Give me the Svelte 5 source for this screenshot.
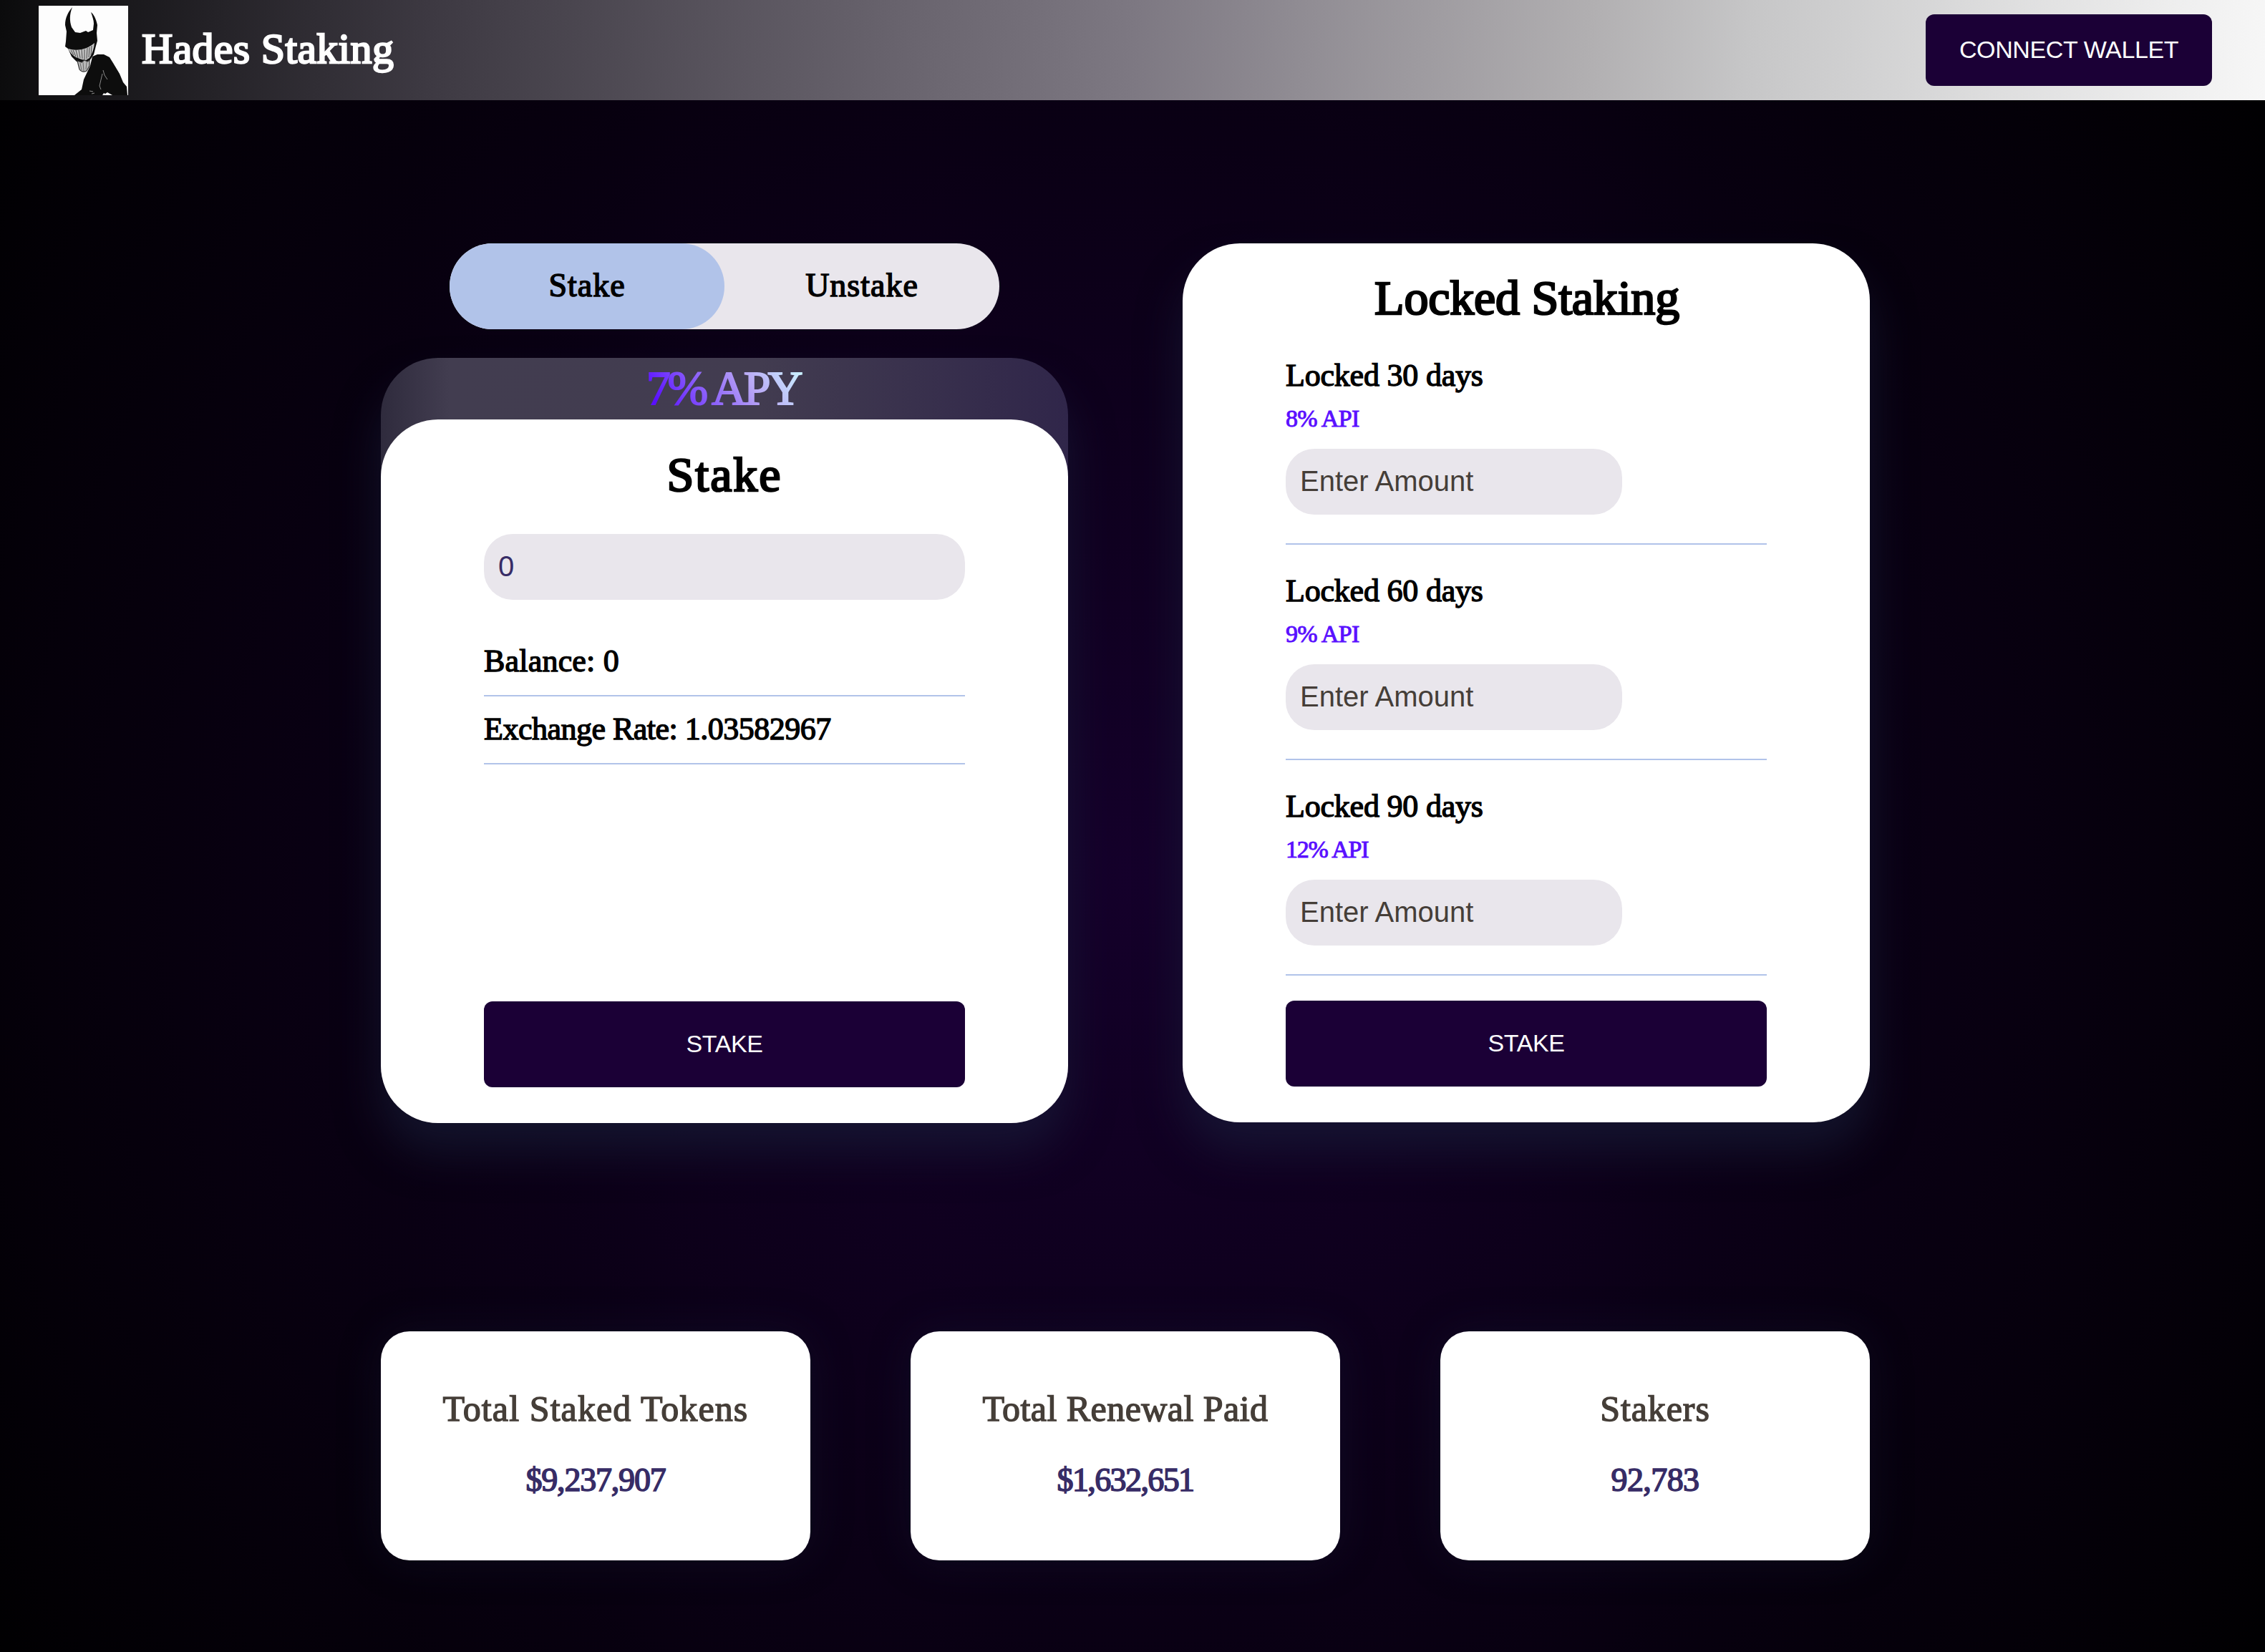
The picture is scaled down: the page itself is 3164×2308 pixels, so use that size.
<script>
  const locks = [
    { days: 'Locked 30 days', rate: '8% API', cls: 'r8' },
    { days: 'Locked 60 days', rate: '9% API', cls: 'r8' },
    { days: 'Locked 90 days', rate: '12% API', cls: 'r12' }
  ];
  const stats = [
    { label: 'Total Staked Tokens', value: '$9,237,907' },
    { label: 'Total Renewal Paid', value: '$1,632,651' },
    { label: 'Stakers', value: '92,783' }
  ];
</script>

<div class="page">
  <header>
    <div class="brand">
      <svg class="logo" viewBox="0 0 125 125">
        <rect width="125" height="125" fill="#fdfdfd" />
        <path fill="#0d0d0d" d="M47 2C41 9 37 17 37 27L39 36 38 50 37 57 41 60 46 71 53 78 63 81 71 77 77 68 80 56 82 49 81 38 82 27C80 18 77 12 73 9C75 15 77 20 77 25L76 34 69 37 66 35 58 38 51 37 46 30C43 21 43 12 47 2Z" />
        <path fill="#0d0d0d" d="M75 71L82 68 91 68 99 72 104 80 113 95 118 107 123 113 124 125H103L96 121 90 125H50L60 117 63 103 72 84Z" />
        <path fill="#c4c4c4" d="M41 60Q50 63 60 61T78 52Q77 64 71 73L66 76 60 75 52 72Q45 68 41 60Z" />
        <path stroke="#2b2b2b" stroke-width=".8" fill="none" d="M45 62 49 69M48 62 52 71M52 62 55 73M56 62 58 73M60 61 61 74M64 61 64 75M68 59 67 74M71 58 70 72M74 56 73 69" />
        <path fill="#b9b9b9" stroke="#333" stroke-width="1.2" d="M54 77 60 79 64 76 68 78 71 76 71 84 67 91Q61 94 57 89Z" />
        <path stroke="#555" stroke-width=".8" fill="none" d="M58 80 60 90M62 79 63 91M67 79 66 89" />
        <path stroke="#8b8b8b" stroke-width="1" fill="none" d="M90 90 92 97 96 103M89 95 85 112 87 117M71 119 76 120M74 123 78 122" />
        <path fill="#eee" d="M89 125 91 122 97 125Z" />
      </svg>
      <h1>Hades Staking</h1>
    </div>
    <button class="connect">CONNECT WALLET</button>
  </header>

  <main>
    <section class="left">
      <div class="toggle">
        <div class="tab active">Stake</div>
        <div class="tab">Unstake</div>
      </div>
      <div class="shell">
        <div class="apy"><span>7% APY</span></div>
        <div class="card">
          <h2 class="h-stake">Stake</h2>
          <div class="field amount">0</div>
          <div class="row first">Balance: 0</div>
          <div class="row exch">Exchange Rate: 1.03582967</div>
          <button class="action">STAKE</button>
        </div>
      </div>
    </section>

    <section class="card locked">
      <h2 class="h-locked">Locked Staking</h2>
      {#each locks as l}
        <div class="lock">
          <div class="days">{l.days}</div>
          <div class="rate {l.cls}">{l.rate}</div>
          <div class="field">Enter Amount</div>
        </div>
      {/each}
      <button class="action">STAKE</button>
    </section>
  </main>

  <footer>
    {#each stats as s, i}
      <div class="stat s{i}">
        <div class="label">{s.label}</div>
        <div class="value">{s.value}</div>
      </div>
    {/each}
  </footer>
</div>

<style>
  :global(body) { margin: 0; background: #000; }
  * { box-sizing: border-box; }
  .page {
    width: 3164px;
    height: 2308px;
    overflow: hidden;
    display: flex;
    flex-direction: column;
    background: radial-gradient(circle at 50% 53%, #15002b 0%, #000 100%);
    font-family: "Liberation Serif", serif;
    color: #000;
  }
  header {
    height: 140px;
    flex: none;
    display: flex;
    align-items: center;
    justify-content: space-between;
    padding: 0 74px 0 54px;
    background: linear-gradient(95deg, #0b0b0c 0%, #3d3942 19%, #69646e 40%, #7d7882 50%, #b1afb1 70%, #c6c6c7 77%, #f7f7f7 100%);
  }
  .brand { display: flex; align-items: center; gap: 19px; }
  .logo { width: 125px; height: 125px; display: block; }
  h1 { margin: 0; font-size: 60px; line-height: 136px; height: 140px; font-weight: 400; color: #fff; -webkit-text-stroke: 2.4px #fff; letter-spacing: 0.3px; white-space: nowrap; }
  button {
    font-family: "Liberation Sans", Arial, sans-serif;
    font-size: 34px;
    letter-spacing: -0.4px;
    color: #fff;
    background: #1b0036;
    border: 0;
    padding: 0 0 3px;
    border-radius: 12px;
    line-height: 1;
    white-space: nowrap;
  }
  .connect { width: 400px; height: 100px; }
  main { display: flex; justify-content: space-between; margin: 200px 552px 0 532px; height: 1229px; flex: none; }
  .left { width: 960px; display: flex; flex-direction: column; align-items: center; }
  .toggle { width: 768px; height: 120px; display: flex; background: #e9e6ec; border-radius: 60px; margin-bottom: 40px; }
  .tab { width: 384px; display: flex; align-items: center; justify-content: center; border-radius: 60px; padding-bottom: 3px; font-size: 46px; letter-spacing: 1px; -webkit-text-stroke: 1.5px #000; }
  .active { background: #b1c3e9; }
  .shell {
    width: 960px;
    height: 1069px;
    border-radius: 80px;
    background: linear-gradient(90deg, #2f2b3d 0%, #423d50 10%, #423c50 55%, #30264a 100%);
    box-shadow: 0 40px 60px rgba(28, 38, 66, 0.5);
  }
  .apy { height: 86px; text-align: center; line-height: 84px; font-size: 68px; letter-spacing: -4.2px; }
  .apy span { background: linear-gradient(55deg, #5a10ff 10%, #b9a8f5 65%, #c9f0ff 95%); -webkit-background-clip: text; background-clip: text; color: transparent; -webkit-text-stroke: 2px transparent; padding-right: 4px; }
  .card { background: #fff; border-radius: 80px; height: 983px; display: flex; flex-direction: column; padding: 0 144px 50px; }
  .card h2 { margin: 0; font-size: 68px; line-height: 72px; font-weight: 400; text-align: center; -webkit-text-stroke: 2.6px #000; white-space: nowrap; }
  .card .h-stake { padding: 41px 0 47px; letter-spacing: 2px; }
  .field {
    font-family: "Liberation Sans", Arial, sans-serif;
    font-size: 40px;
    line-height: 90px;
    height: 92px;
    flex: none;
    padding-left: 20px;
    border-radius: 40px;
    background: #e9e6ec;
    color: #453e38;
  }
  .amount { color: #372c66; }
  .row { height: 95px; flex: none; border-bottom: 2px solid #b1c3e9; font-size: 44px; line-height: 91px; letter-spacing: 0.2px; white-space: nowrap; -webkit-text-stroke: 1.4px #000; }
  .row.first { margin-top: 40px; }
  .row.exch { letter-spacing: -0.5px; }
  .action { height: 120px; width: 672px; flex: none; margin-top: auto; }
  .locked { width: 960px; height: 1228px; box-shadow: 0 40px 60px rgba(28, 38, 66, 0.5); }
  .card.locked .h-locked { height: 120px; padding: 40px 0 0 2px; letter-spacing: -0.2px; }
  .lock { height: 301px; flex: none; border-bottom: 2px solid #b1c3e9; padding-top: 35px; }
  .days { font-size: 44px; line-height: 60px; height: 62px; letter-spacing: -0.2px; -webkit-text-stroke: 1.4px #000; white-space: nowrap; }
  .rate { font-size: 34px; line-height: 56px; height: 70px; color: #5a10ff; -webkit-text-stroke: 1px #5a10ff; white-space: nowrap; }
  .r8 { letter-spacing: -0.7px; }
  .r12 { letter-spacing: -1.2px; }
  .lock .field { width: 470px; }
  footer { display: flex; justify-content: space-between; margin: 291px 552px 0 532px; height: 320px; flex: none; }
  .stat { width: 600px; height: 320px; background: #fff; border-radius: 40px; text-align: center; padding-top: 78px; box-shadow: 0 0 60px rgba(28, 38, 66, 0.25); white-space: nowrap; }
  .label { font-size: 50px; line-height: 60px; color: #453e38; -webkit-text-stroke: 1.4px #453e38; }
  .value { font-size: 46px; line-height: 60px; margin-top: 40px; color: #372c66; -webkit-text-stroke: 1.6px #372c66; }
  .s0 .label { letter-spacing: 1.1px; }
  .s0 .value { letter-spacing: -1.2px; }
  .s1 .label { letter-spacing: 0.45px; }
  .s1 .value { letter-spacing: -1.6px; }
  .s2 .label { letter-spacing: 0.9px; }
  .s2 .value { letter-spacing: -0.6px; }
</style>
